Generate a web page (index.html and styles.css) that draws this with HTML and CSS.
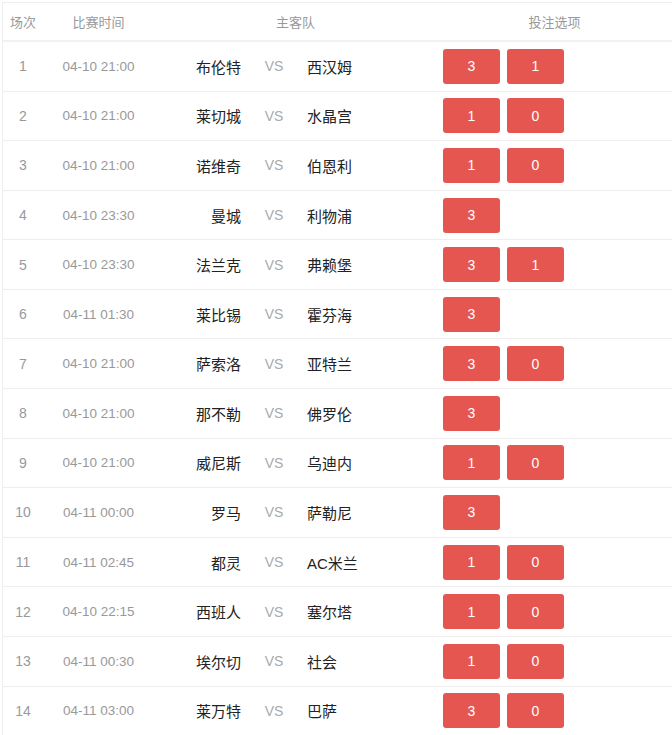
FILE: index.html
```html
<!DOCTYPE html>
<html lang="zh">
<head>
<meta charset="utf-8">
<link rel="stylesheet" href="styles.css">
</head>
<body>
<div class="table">
  <div class="row head">
    <div class="c-no">场次</div>
    <div class="c-time">比赛时间</div>
    <div class="c-team-h">主客队</div>
    <div class="c-opt-h">投注选项</div>
  </div>
  <div class="row"><div class="c-no">1</div><div class="c-time">04-10 21:00</div><div class="c-team"><span class="home">布伦特</span><span class="vs">VS</span><span class="away">西汉姆</span></div><div class="c-opt"><span class="btn">3</span><span class="btn">1</span></div></div>
  <div class="row"><div class="c-no">2</div><div class="c-time">04-10 21:00</div><div class="c-team"><span class="home">莱切城</span><span class="vs">VS</span><span class="away">水晶宫</span></div><div class="c-opt"><span class="btn">1</span><span class="btn">0</span></div></div>
  <div class="row"><div class="c-no">3</div><div class="c-time">04-10 21:00</div><div class="c-team"><span class="home">诺维奇</span><span class="vs">VS</span><span class="away">伯恩利</span></div><div class="c-opt"><span class="btn">1</span><span class="btn">0</span></div></div>
  <div class="row"><div class="c-no">4</div><div class="c-time">04-10 23:30</div><div class="c-team"><span class="home">曼城</span><span class="vs">VS</span><span class="away">利物浦</span></div><div class="c-opt"><span class="btn">3</span></div></div>
  <div class="row"><div class="c-no">5</div><div class="c-time">04-10 23:30</div><div class="c-team"><span class="home">法兰克</span><span class="vs">VS</span><span class="away">弗赖堡</span></div><div class="c-opt"><span class="btn">3</span><span class="btn">1</span></div></div>
  <div class="row"><div class="c-no">6</div><div class="c-time">04-11 01:30</div><div class="c-team"><span class="home">莱比锡</span><span class="vs">VS</span><span class="away">霍芬海</span></div><div class="c-opt"><span class="btn">3</span></div></div>
  <div class="row"><div class="c-no">7</div><div class="c-time">04-10 21:00</div><div class="c-team"><span class="home">萨索洛</span><span class="vs">VS</span><span class="away">亚特兰</span></div><div class="c-opt"><span class="btn">3</span><span class="btn">0</span></div></div>
  <div class="row"><div class="c-no">8</div><div class="c-time">04-10 21:00</div><div class="c-team"><span class="home">那不勒</span><span class="vs">VS</span><span class="away">佛罗伦</span></div><div class="c-opt"><span class="btn">3</span></div></div>
  <div class="row"><div class="c-no">9</div><div class="c-time">04-10 21:00</div><div class="c-team"><span class="home">威尼斯</span><span class="vs">VS</span><span class="away">乌迪内</span></div><div class="c-opt"><span class="btn">1</span><span class="btn">0</span></div></div>
  <div class="row"><div class="c-no">10</div><div class="c-time">04-11 00:00</div><div class="c-team"><span class="home">罗马</span><span class="vs">VS</span><span class="away">萨勒尼</span></div><div class="c-opt"><span class="btn">3</span></div></div>
  <div class="row"><div class="c-no">11</div><div class="c-time">04-11 02:45</div><div class="c-team"><span class="home">都灵</span><span class="vs">VS</span><span class="away">AC米兰</span></div><div class="c-opt"><span class="btn">1</span><span class="btn">0</span></div></div>
  <div class="row"><div class="c-no">12</div><div class="c-time">04-10 22:15</div><div class="c-team"><span class="home">西班人</span><span class="vs">VS</span><span class="away">塞尔塔</span></div><div class="c-opt"><span class="btn">1</span><span class="btn">0</span></div></div>
  <div class="row"><div class="c-no">13</div><div class="c-time">04-11 00:30</div><div class="c-team"><span class="home">埃尔切</span><span class="vs">VS</span><span class="away">社会</span></div><div class="c-opt"><span class="btn">1</span><span class="btn">0</span></div></div>
  <div class="row"><div class="c-no">14</div><div class="c-time">04-11 03:00</div><div class="c-team"><span class="home">莱万特</span><span class="vs">VS</span><span class="away">巴萨</span></div><div class="c-opt"><span class="btn">3</span><span class="btn">0</span></div></div>
</div>
</body>
</html>
```
FILE: styles.css
```css
html, body {
  margin: 0;
  padding: 0;
  background: #fff;
}
body {
  font-family: "Liberation Sans", "Noto Sans CJK SC", sans-serif;
  font-size: 14px;
  color: #333;
}
.table {
  margin: 2px 0 0 2px;
  border-top: 1px solid #eee;
  border-left: 1px solid #eee;
}
.row {
  display: grid;
  grid-template-columns: 40px 111px 283px 1fr;
  align-items: center;
  height: 48.58px;
  border-bottom: 1px solid #eee;
}
.row.head {
  height: 37px;
  border-bottom: 2px solid #f2f2f2;
  color: #999;
  font-size: 13px;
}
.row.head .c-no {
  font-size: 13px;
}
.c-no {
  text-align: center;
  color: #999;
  font-size: 14px;
}
.c-time {
  text-align: center;
  color: #999;
  font-size: 13.5px;
}
.row.head .c-time {
  font-size: 13px;
}
.c-team-h, .c-opt-h {
  text-align: center;
}
.c-team {
  display: grid;
  grid-template-columns: 87px 66px 1fr;
  align-items: center;
  font-size: 15px;
  color: #222;
}
.home {
  text-align: right;
}
.vs {
  text-align: center;
  color: #aaa;
  font-size: 14px;
}
.away {
  text-align: left;
}
.c-opt {
  display: flex;
  gap: 7px;
  padding-left: 6px;
}
.btn {
  width: 57px;
  height: 35px;
  border-radius: 3px;
  background: #e65651;
  color: #fff;
  font-size: 14px;
  display: flex;
  align-items: center;
  justify-content: center;
}
```
